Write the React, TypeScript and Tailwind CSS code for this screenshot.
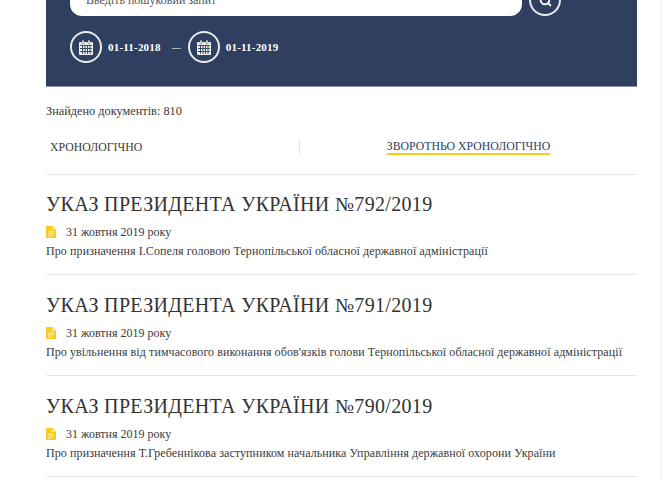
import { Search } from "lucide-react";

const serif = "font-['Liberation_Serif',Georgia,serif]";

type Decree = {
  title: string;
  text: string;
};

const decrees: Decree[] = [
  {
    title: "УКАЗ ПРЕЗИДЕНТА УКРАЇНИ №792/2019",
    text: "Про призначення І.Сопеля головою Тернопільської обласної державної адміністрації",
  },
  {
    title: "УКАЗ ПРЕЗИДЕНТА УКРАЇНИ №791/2019",
    text: "Про увільнення від тимчасового виконання обов'язків голови Тернопільської обласної державної адміністрації",
  },
  {
    title: "УКАЗ ПРЕЗИДЕНТА УКРАЇНИ №790/2019",
    text: "Про призначення Т.Гребеннікова заступником начальника Управління державної охорони України",
  },
];

function CalendarIcon() {
  return (
    <svg width="14" height="15" viewBox="0 0 14 15" className="shrink-0">
      <path d="M1 2h12a1 1 0 0 1 1 1v11a1 1 0 0 1-1 1H1a1 1 0 0 1-1-1V3a1 1 0 0 1 1-1z" fill="#f2f0ee" />
      <rect x="3" y="0" width="2" height="4" rx="1" fill="#ffffff" stroke="#2f3f5f" strokeWidth="0.5" />
      <rect x="9" y="0" width="2" height="4" rx="1" fill="#ffffff" stroke="#2f3f5f" strokeWidth="0.5" />
      <path
        d="M1 5.5h12M1 8.5h12M1 11.5h12M3.5 5v9M6 5v9M8.5 5v9M11 5v9"
        stroke="#2f3f5f"
        strokeWidth="0.9"
        fill="none"
      />
    </svg>
  );
}

function DateField({ value }: { value: string }) {
  return (
    <div className="flex items-center gap-[6px]">
      <span className="flex h-[32px] w-[32px] items-center justify-center rounded-full border-2 border-[#e9ebef]">
        <CalendarIcon />
      </span>
      <span className="text-[11px] font-bold tracking-[0.2px] text-white">{value}</span>
    </div>
  );
}

function DocIcon() {
  return (
    <svg width="10" height="12" viewBox="0 0 10 12" className="shrink-0">
      <path d="M1 0h5.5L10 3.5V11a1 1 0 0 1-1 1H1a1 1 0 0 1-1-1V1a1 1 0 0 1 1-1z" fill="#fdc91a" />
      <path d="M6 0.5V4h3.5" fill="#ffe48a" />
      <path d="M2 6h6M2 8h6M2 10h4" stroke="#fff3c0" strokeWidth="1" />
    </svg>
  );
}

export default function App() {
  return (
    <div className={`${serif} h-[478px] w-[665px] overflow-hidden bg-white text-[#3a3a3a]`}>
      <div className="mr-[3px] h-full border-r border-[#eeeeee]">
        <div className="ml-[46px] mr-[24px]">
          <section className="h-[87px] overflow-hidden border-b border-[#8a94a8] bg-[#2f3f5f] pl-[24px]">
            <div className="-mt-[16px] flex items-center gap-[7px]">
              <div className="flex h-[31px] w-[452px] items-center rounded-[12px] bg-white pl-[16px] text-[12px] text-[#555]">
                Введіть пошуковий запит
              </div>
              <span className="flex h-[32px] w-[32px] items-center justify-center rounded-full border-2 border-[#e9ebef] text-white">
                <Search size={13} strokeWidth={3.5} />
              </span>
            </div>
            <div className="mt-[15px] flex items-center">
              <DateField value="01-11-2018" />
              <span className="ml-[11px] mr-[7px] text-[9px] leading-none text-white">—</span>
              <DateField value="01-11-2019" />
            </div>
          </section>

          <p className="mt-[17px] text-[12.3px] leading-[14px]">Знайдено документів: 810</p>

          <div className="mt-[21px] flex h-[16px] items-center text-[11.8px] leading-[14px]">
            <div className="flex h-full w-[254px] items-center border-r border-[#e5e5e5] pl-[4px]">ХРОНОЛОГІЧНО</div>
            <div className="flex flex-1 justify-center">
              <span className="border-b-2 border-[#fdc91a] text-[#2f3f5f]">ЗВОРОТНЬО ХРОНОЛОГІЧНО</span>
            </div>
          </div>

          <div className="mt-[18.6px]">
            {decrees.map((d) => (
              <article key={d.title} className="h-[100.7px] border-t border-[#e8e8e8] pt-[17.6px]">
                <h2 className="text-[20px] leading-[24px] tracking-[0.33px] text-[#333]">{d.title}</h2>
                <div className="mt-[9px] flex items-center gap-[10px] text-[12px] leading-[14px]">
                  <DocIcon />
                  <span>31 жовтня 2019 року</span>
                </div>
                <p className="mt-[5px] text-[12px] leading-[14px] tracking-[0.09px]">{d.text}</p>
              </article>
            ))}
            <div className="border-t border-[#e8e8e8]" />
          </div>
        </div>
      </div>
    </div>
  );
}
